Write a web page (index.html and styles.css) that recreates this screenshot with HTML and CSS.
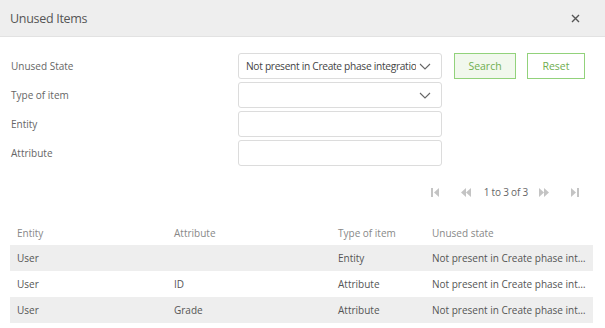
FILE: index.html
```html
<!DOCTYPE html>
<html lang="en">
<head>
  <meta charset="UTF-8" />
  <title>Unused Items</title>
  <link rel="stylesheet" href="styles.css">
</head>
<body>

  <div class="dialog">
    <div class="dialog-header">
      <h2>Unused Items</h2>
      <span class="close">
        <svg width="9" height="9" viewBox="0 0 9 9"><path d="M1 1 L8 8 M8 1 L1 8" stroke="#555" stroke-width="1.4"/></svg>
      </span>
    </div>

    <div class="dialog-body">
      <div class="filters">
        <label>Unused State</label>
        <div class="field select">
          <span class="value">Not present in Create phase integration</span>
          <svg class="caret" width="12" height="7" viewBox="0 0 12 7"><path d="M1 1 L6 6 L11 1" fill="none" stroke="#666" stroke-width="1.1"/></svg>
        </div>
        <div class="buttons">
          <button class="btn btn-primary">Search</button>
          <button class="btn">Reset</button>
        </div>

        <label>Type of item</label>
        <div class="field select">
          <span class="value"></span>
          <svg class="caret" width="12" height="7" viewBox="0 0 12 7"><path d="M1 1 L6 6 L11 1" fill="none" stroke="#666" stroke-width="1.1"/></svg>
        </div>
        <div></div>

        <label>Entity</label>
        <div class="field"></div>
        <div></div>

        <label>Attribute</label>
        <div class="field"></div>
        <div></div>
      </div>

      <div class="pager">
        <svg class="p-first" width="8" height="9" viewBox="0 0 8 9"><rect x="0" y="0" width="2" height="9" fill="#c4c4c4"/><path d="M8 0 L3 4.5 L8 9 Z" fill="#c4c4c4"/></svg>
        <svg class="p-prev" width="10" height="9" viewBox="0 0 10 9"><path d="M5 0 L0 4.5 L5 9 Z M10 0 L5 4.5 L10 9 Z" fill="#c4c4c4"/></svg>
        <span class="p-text">1 to 3 of 3</span>
        <svg class="p-next" width="10" height="9" viewBox="0 0 10 9"><path d="M0 0 L5 4.5 L0 9 Z M5 0 L10 4.5 L5 9 Z" fill="#c4c4c4"/></svg>
        <svg class="p-last" width="8" height="9" viewBox="0 0 8 9"><path d="M0 0 L5 4.5 L0 9 Z" fill="#c4c4c4"/><rect x="6" y="0" width="2" height="9" fill="#c4c4c4"/></svg>
      </div>

      <table class="grid">
        <thead>
          <tr>
            <th class="c-entity">Entity</th>
            <th class="c-attr">Attribute</th>
            <th class="c-type">Type of item</th>
            <th class="c-state">Unused state</th>
          </tr>
        </thead>
        <tbody>
          <tr>
            <td>User</td>
            <td></td>
            <td>Entity</td>
            <td><div class="clip">Not present in Create phase integration</div></td>
          </tr>
          <tr>
            <td>User</td>
            <td>ID</td>
            <td>Attribute</td>
            <td><div class="clip">Not present in Create phase integration</div></td>
          </tr>
          <tr>
            <td>User</td>
            <td>Grade</td>
            <td>Attribute</td>
            <td><div class="clip">Not present in Create phase integration</div></td>
          </tr>
        </tbody>
      </table>
    </div>
  </div>

</body>
</html>
```

FILE: styles.css
```css
* {
  box-sizing: border-box;
  margin: 0;
  font-family: 'Open Sans', 'Noto Sans', sans-serif;
}

body {
  background-color: #ffffff;
  width: 605px;
  height: 328px;
  overflow: hidden;
}

.dialog {
  display: flex;
  flex-direction: column;
}

.dialog-header {
  height: 37px;
  background-color: #eeeeee;
  border-bottom: 1px solid #e2e2e2;
  display: flex;
  align-items: center;
  justify-content: space-between;
  padding: 0 25px 0 10px;
}

.dialog-header h2 {
  font-size: 12.5px;
  font-weight: normal;
  color: #555;
  letter-spacing: -0.3px;
}

.close {
  display: flex;
}

.dialog-body {
  padding: 16px 12px 0 10px;
}

.filters {
  display: grid;
  grid-template-columns: 228px 204px 1fr;
  grid-auto-rows: 26px;
  row-gap: 3px;
  align-items: center;
}

.filters label {
  font-size: 10px;
  color: #666;
  padding-left: 1px;
}

.field {
  height: 26px;
  border: 1px solid #dcdcdc;
  border-radius: 3px;
  background: #fff;
  display: flex;
  align-items: center;
  padding: 0 10px 0 7px;
}

.field .value {
  flex: 1;
  font-size: 10.2px;
  color: #444;
  white-space: nowrap;
  overflow: hidden;
  letter-spacing: -0.3px;
}

.field .caret {
  margin-left: 3px;
  flex: none;
}

.buttons {
  display: flex;
  gap: 11px;
  padding-left: 12px;
  height: 26px;
}

.btn {
  height: 26px;
  padding: 0;
  width: 62px;
  border: 1px solid #92d27b;
  background: #fff;
  color: #6fae4f;
  font-size: 10.5px;
  cursor: pointer;
}

.btn + .btn {
  width: 58px;
}

.btn-primary {
  background: #f1f8ed;
}

.pager {
  display: flex;
  align-items: center;
  justify-content: flex-end;
  height: 20px;
  margin-top: 16px;
  padding-right: 14px;
}

.p-first {
  margin-right: 22px;
}

.p-text {
  font-size: 10px;
  color: #666;
  margin: 0 11px 0 13px;
  letter-spacing: -0.2px;
}

.p-last {
  margin-left: 22px;
}

.grid {
  margin-top: 19px;
  width: 583px;
  border-collapse: collapse;
  table-layout: fixed;
}

.grid th {
  font-size: 10px;
  font-weight: normal;
  color: #888;
  text-align: left;
  height: 24px;
  padding: 0 7px;
}

.grid td {
  font-size: 10px;
  color: #555;
  height: 26px;
  padding: 0 7px;
}

.grid tbody tr:nth-child(odd) {
  background-color: #eeeeee;
}

.c-entity { width: 157px; }
.c-attr { width: 164px; }
.c-type { width: 94px; }

.clip {
  white-space: nowrap;
  overflow: hidden;
  text-overflow: ellipsis;
}
```
